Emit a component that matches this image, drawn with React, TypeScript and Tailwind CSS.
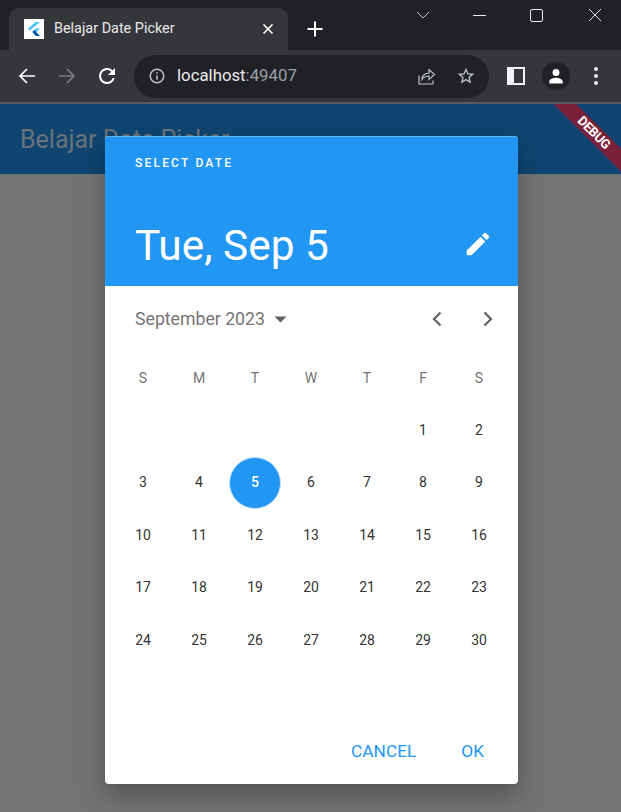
import React from "react";

const Back = ({ c = "#fff", flip = false }: { c?: string; flip?: boolean }) => (
  <svg width="20" height="20" viewBox="0 0 20 20" fill="none" stroke={c} strokeWidth="1.7" className={flip ? "-scale-x-100" : ""}>
    <path d="M18 10H3M10 3l-7 7 7 7" />
  </svg>
);

const weeks: (number | null)[][] = [
  [null, null, null, null, null, 1, 2],
  [3, 4, 5, 6, 7, 8, 9],
  [10, 11, 12, 13, 14, 15, 16],
  [17, 18, 19, 20, 21, 22, 23],
  [24, 25, 26, 27, 28, 29, 30],
];

export default function App() {
  return (
    <div className="relative w-[621px] h-[812px] overflow-hidden bg-[#737373] font-['Roboto',sans-serif]">
      {/* tab strip */}
      <div className="h-[50px] bg-[#202124] flex items-end pl-[9px]">
        <div className="w-[279px] h-[42px] bg-[#35363a] rounded-t-[10px] flex items-center pl-[15px] pr-[14px]">
          <div className="w-5 h-5 bg-white flex items-center justify-center shrink-0">
            <svg width="16" height="16" viewBox="0 0 16 16">
              <path d="M9.500 1h4.500L3.500 9.500 1.800 8z" fill="#47c5fb" />
              <path d="M9.800 7.600h4.200L8.400 13 6.300 11z" fill="#47c5fb" />
              <path d="M6.300 11l2.100-2 5.600 6H9.800z" fill="#00569e" />
            </svg>
          </div>
          <span className="ml-[10px] flex-1 text-[14.400px] text-[#e8eaed]">Belajar Date Picker</span>
          <svg width="12" height="12" viewBox="0 0 12 12" stroke="#fff" strokeWidth="1.600">
            <path d="M1.500 1.500l9 9M10.500 1.500l-9 9" />
          </svg>
        </div>
        <div className="h-[42px] flex items-center ml-[19px]">
          <svg width="16" height="16" viewBox="0 0 16 16" stroke="#fff" strokeWidth="2">
            <path d="M8 0.500v15M0.500 8h15" />
          </svg>
        </div>
        <div className="flex-1 self-start h-[30px] flex items-center justify-end">
          <svg width="14" height="8" viewBox="0 0 14 8" fill="none" stroke="#c4c7c9" strokeWidth="1" className="mr-[43px]">
            <path d="M1 1l6 6 6-6" />
          </svg>
          <div className="w-[13px] h-[1px] bg-[#e8eaed] mr-[44px]" />
          <div className="w-[13px] h-[13px] border border-[#e8eaed] rounded-[2px] mr-[45px]" />
          <svg width="14" height="14" viewBox="0 0 14 14" stroke="#e8eaed" strokeWidth="1" className="mr-[19px]">
            <path d="M1 1l12 12M13 1L1 13" />
          </svg>
        </div>
      </div>

      {/* toolbar */}
      <div className="h-[52px] bg-[#35363a] flex items-center pl-[17px]">
        <Back />
        <div className="ml-[20px]"><Back c="#7c7d80" flip /></div>
        <svg className="ml-[18px]" width="24" height="24" viewBox="0 0 24 24" fill="#fff">
          <path d="M17.650 6.350A7.960 7.960 0 0 0 12 4a8 8 0 1 0 7.730 10h-2.080A6 6 0 1 1 12 6c1.660 0 3.140.690 4.220 1.780L13 11h7V4z" />
        </svg>
        <div className="ml-[15px] w-[355px] h-[43px] rounded-full bg-[#202124] flex items-center pl-[14px]">
          <svg width="18" height="18" viewBox="0 0 24 24" fill="#bdc1c6">
            <path d="M11 7h2v2h-2zm0 4h2v6h-2zm1-9a10 10 0 1 0 0 20 10 10 0 0 0 0-20zm0 18a8 8 0 1 1 0-16 8 8 0 0 1 0 16z" />
          </svg>
          <span className="ml-[11px] text-[16.800px] text-[#e8eaed]">localhost<span className="text-[#9aa0a6]">:49407</span></span>
          <div className="flex-1" />
          <svg width="20" height="20" viewBox="0 0 20 20" fill="none" stroke="#bdc1c6" strokeWidth="1.200">
            <path d="M3 9.500V18h14v-3.500" />
            <path d="M6 13.500c0-4 3-6.500 7-6.500V3.500l5.500 5-5.500 5v-3.500c-3 0-5.500 1-7 3.500z" />
          </svg>
          <svg className="ml-[20px] mr-[13px]" width="20" height="20" viewBox="0 0 24 24" fill="#bdc1c6">
            <path d="M22 9.240l-7.190-.620L12 2 9.190 8.630 2 9.240l5.460 4.730L5.820 21 12 17.270 18.180 21l-1.630-7.030zM12 15.400l-3.760 2.270 1-4.280-3.320-2.880 4.380-.380L12 6.100l1.710 4.040 4.380.380-3.320 2.880 1 4.280z" />
          </svg>
        </div>
        <div className="ml-[18px] w-[18px] h-[18px] bg-[#f1f3f4] flex justify-end p-[2px] pl-[4px]">
          <div className="w-[9px] h-full bg-[#35363a]" />
        </div>
        <div className="ml-[17px] w-7 h-7 rounded-full bg-[#202124] flex items-center justify-center">
          <svg width="20" height="20" viewBox="0 0 24 24" fill="#fff">
            <path d="M12 12a4.200 4.200 0 1 0 0-8.400 4.200 4.200 0 0 0 0 8.400zm0 2c-3 0-8 1.500-8 4.500V21h16v-2.500c0-3-5-4.500-8-4.500z" />
          </svg>
        </div>
        <div className="ml-[24px] flex flex-col gap-[3px]">
          <div className="w-1 h-1 rounded-full bg-[#e8eaed]" />
          <div className="w-1 h-1 rounded-full bg-[#e8eaed]" />
          <div className="w-1 h-1 rounded-full bg-[#e8eaed]" />
        </div>
      </div>
      <div className="h-[2px] bg-[#5a5b5e]" />

      {/* app bar */}
      <div className="h-[70px] bg-[#0f4570] flex items-center pl-[20px]">
        <span className="text-[25px] text-[#6b7378] leading-none">Belajar Date Picker</span>
      </div>

      {/* debug banner */}
      <div className="absolute top-[104px] right-0 w-[70px] h-[70px] overflow-hidden">
        <div className="absolute left-[-7px] top-[21px] w-[100px] h-[15.500px] bg-[#7a2038] rotate-45 flex items-center justify-center">
          <span className="text-[13px] font-bold text-white leading-none tracking-[-0.300px]">DEBUG</span>
        </div>
      </div>

      {/* dialog */}
      <div className="absolute left-[105px] top-[136px] w-[413px] h-[648px] rounded-[4px] bg-white overflow-hidden shadow-[0_11px_24px_rgba(0,0,0,0.28)] flex flex-col">
        <div className="h-[150px] bg-[#2196f3] border-t border-[#64b5f6] pl-[30px] pr-[25px] flex flex-col shrink-0">
          <div className="pt-[19px] text-[12px] leading-[14px] font-medium text-white tracking-[2.200px]">SELECT DATE</div>
          <div className="mt-[51px] flex items-center justify-between">
            <span className="text-[42.400px] leading-[50px] text-white">Tue, Sep 5</span>
            <svg width="30" height="30" viewBox="0 0 24 24" fill="#fff" className="mt-[-4px]">
              <path d="M3 17.250V21h3.750L17.810 9.940l-3.750-3.750zM20.710 7.040a1 1 0 0 0 0-1.410l-2.340-2.340a1 1 0 0 0-1.410 0l-1.830 1.830 3.750 3.750z" />
            </svg>
          </div>
        </div>

        <div className="h-[64px] pl-[30px] pr-[24px] pt-[2px] flex items-center shrink-0">
          <span className="text-[17.700px] text-[#757575]">September 2023</span>
          <svg className="ml-[9px]" width="13" height="7" viewBox="0 0 13 7" fill="#616161">
            <path d="M0.500 0.500h12L6.500 6.500z" />
          </svg>
          <div className="flex-1" />
          <svg width="12" height="16" viewBox="0 0 12 16" fill="none" stroke="#616161" strokeWidth="2.200">
            <path d="M9.500 1.500L3 8l6.500 6.500" />
          </svg>
          <svg className="ml-[39px]" width="12" height="16" viewBox="0 0 12 16" fill="none" stroke="#616161" strokeWidth="2.200">
            <path d="M2.500 1.500L9 8l-6.500 6.500" />
          </svg>
        </div>

        <div className="pl-[10px] pr-[11px] flex flex-col flex-1">
          <div className="grid grid-cols-7 mt-[2px] h-[52px] items-center text-center text-[14px] text-[#757575]">
            {["S", "M", "T", "W", "T", "F", "S"].map((d, i) => (
              <span key={i}>{d}</span>
            ))}
          </div>
          {weeks.map((w, i) => (
            <div key={i} className="grid grid-cols-7 h-[52.500px] items-center justify-items-center text-[14px] text-[#333333]">
              {w.map((d, j) =>
                d === 5 ? (
                  <div key={j} className="w-[52px] h-[52px] rounded-full bg-[#2196f3] border border-[#bbdefb] flex items-center justify-center text-white font-medium">
                    {d}
                  </div>
                ) : (
                  <span key={j}>{d}</span>
                )
              )}
            </div>
          ))}
          <div className="flex-1" />
          <div className="flex justify-end items-center h-[32px] mb-[16px] pr-[23px] text-[17.300px] text-[#2196f3]">
            <span>CANCEL</span>
            <span className="ml-[45px]">OK</span>
          </div>
        </div>
      </div>
    </div>
  );
}
